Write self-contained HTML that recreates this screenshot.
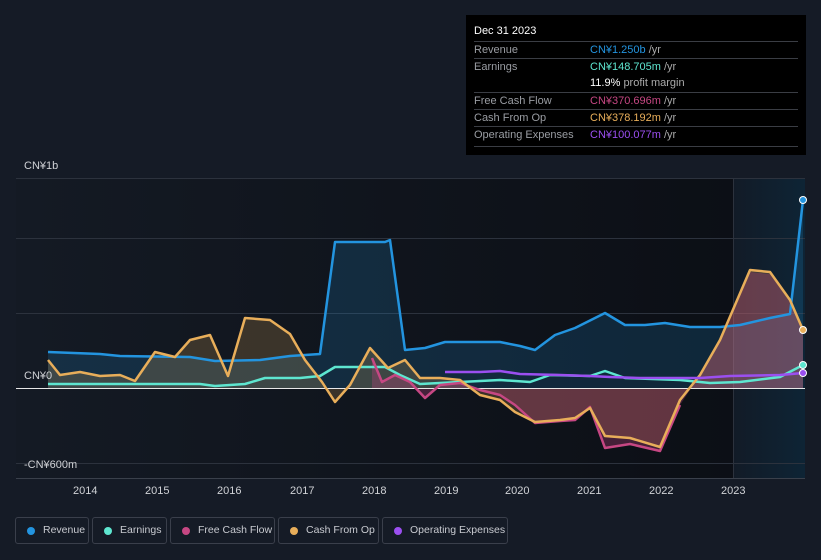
<!DOCTYPE html>
<html><head><meta charset="utf-8"><style>
body{margin:0;width:821px;height:560px;background:#151b26;font-family:"Liberation Sans",sans-serif;overflow:hidden;position:relative}
.tt{position:absolute;left:466px;top:15px;width:340px;height:140px;background:#000;color:#ccc;font-size:11px}
.tt .h{position:absolute;left:8px;top:10px;color:#fff;font-size:11px}
.row{position:absolute;left:8px;width:324px;border-top:1px solid #3a3d44;height:17px;line-height:17px;white-space:nowrap}
.row span.l{color:#9a9da3}
.row span.v{position:absolute;left:116px}
.u{color:#aaa}
.leg{position:absolute;top:517px;height:27px;border:1px solid #3a3f4b;border-radius:3px;color:#c8cad0;font-size:10.5px;line-height:25px;box-sizing:border-box;white-space:nowrap}
.leg i{position:absolute;left:11px;top:9px;width:8px;height:8px;border-radius:50%}
.leg span{position:absolute;left:27px}
.ax{position:absolute;color:#d0d2d6;font-size:11px;white-space:nowrap}
</style></head><body>
<svg width="821" height="560" style="position:absolute;left:0;top:0">
<defs>
<linearGradient id="pb" x1="0" x2="1"><stop offset="0" stop-color="#141a24"/><stop offset="1" stop-color="#0b0e14"/></linearGradient>
<linearGradient id="fc" x1="0" x2="1"><stop offset="0" stop-color="#121b27"/><stop offset="1" stop-color="#0e2435"/></linearGradient>
</defs>
<rect x="16" y="178" width="789" height="300" fill="url(#pb)"/>
<rect x="733" y="178" width="72" height="300" fill="url(#fc)"/>
<g stroke="#2c323d" stroke-width="1">
<line x1="16" x2="805" y1="178.5" y2="178.5"/><line x1="16" x2="805" y1="238.5" y2="238.5"/>
<line x1="16" x2="805" y1="313.5" y2="313.5"/><line x1="16" x2="805" y1="463.5" y2="463.5"/>
<line x1="16" x2="805" y1="478.5" y2="478.5" stroke="#3a404b"/>
<line x1="733.5" x2="733.5" y1="178" y2="478"/>
</g>
<path d="M48 352 L100 354 L120 356 L190 357 L215 361 L260 360 L290 356 L320 354 L335 242 L385 242 L390 240 L405 350 L425 348 L445 342 L500 342 L520 346 L535 350 L555 335 L575 328 L605 313 L625 325 L645 325 L665 323 L690 327 L720 327 L740 325 L770 318 L790 314 L803 200 L803 388 L48 388Z" fill="#2394df" fill-opacity="0.18"/>
<path d="M48 360 L60 375 L80 372 L100 376 L120 375 L135 381 L155 352 L175 357 L190 340 L210 335 L228 376 L245 318 L270 320 L290 334 L305 360 L322 382 L335 402 L350 385 L370 348 L388 368 L405 360 L420 378 L440 378 L460 380 L480 395 L500 400 L515 412 L535 422 L560 420 L575 418 L590 408 L605 436 L630 438 L660 447 L680 400 L700 375 L720 340 L750 270 L770 272 L790 300 L803 330 L803 388 L48 388Z" fill="#e8ae5a" fill-opacity="0.2"/>
<path d="M372 358 L382 382 L395 375 L410 382 L425 398 L440 385 L460 383 L480 390 L500 395 L515 405 L535 423 L560 421 L575 420 L590 407 L605 448 L630 444 L660 451 L680 405 L700 375 L720 342 L750 272 L770 274 L790 302 L803 332 L803 388 L372 388Z" fill="#c64783" fill-opacity="0.3"/>
<line x1="16" x2="805" y1="388.5" y2="388.5" stroke="#e8e8e8" stroke-width="1"/>
<g fill="none" stroke-width="2.5" stroke-linejoin="round">
<path d="M48 352 L100 354 L120 356 L190 357 L215 361 L260 360 L290 356 L320 354 L335 242 L385 242 L390 240 L405 350 L425 348 L445 342 L500 342 L520 346 L535 350 L555 335 L575 328 L605 313 L625 325 L645 325 L665 323 L690 327 L720 327 L740 325 L770 318 L790 314 L803 200" stroke="#2394df"/>
<path d="M48 384 L200 384 L215 386 L245 384 L265 378 L300 378 L320 376 L335 367 L385 367 L400 375 L420 384 L460 382 L500 380 L530 382 L550 375 L590 376 L605 371 L625 378 L680 380 L710 383 L740 382 L780 377 L803 365" stroke="#5ee6d0"/>
<path d="M372 358 L382 382 L395 375 L410 382 L425 398 L440 385 L460 383 L480 390 L500 395 L515 405 L535 423 L560 421 L575 420 L590 407 L605 448 L630 444 L660 451 L680 405" stroke="#c64783"/>
<path d="M48 360 L60 375 L80 372 L100 376 L120 375 L135 381 L155 352 L175 357 L190 340 L210 335 L228 376 L245 318 L270 320 L290 334 L305 360 L322 382 L335 402 L350 385 L370 348 L388 368 L405 360 L420 378 L440 378 L460 380 L480 395 L500 400 L515 412 L535 422 L560 420 L575 418 L590 408 L605 436 L630 438 L660 447 L680 400 L700 375 L720 340 L750 270 L770 272 L790 300 L803 330" stroke="#e8ae5a"/>
<path d="M445 372 L480 372 L500 371 L520 374 L560 375 L590 376 L610 377 L640 378 L700 378 L730 376 L780 375 L803 373" stroke="#9b4ff0"/>
</g>
<g stroke="#fff" stroke-width="1">
<circle cx="803" cy="200" r="3.5" fill="#2394df"/><circle cx="803" cy="330" r="3.5" fill="#e8ae5a"/>
<circle cx="803" cy="365" r="3.5" fill="#5ee6d0"/><circle cx="803" cy="373" r="3.5" fill="#9b4ff0"/>
</g>
</svg>
<div class="ax" style="left:24px;top:160px">CN¥1b</div>
<div class="ax" style="left:24px;top:370px">CN¥0</div>
<div class="ax" style="left:24px;top:459px">-CN¥600m</div>
<div class="ax" style="left:73px;top:485px">2014</div><div class="ax" style="left:145px;top:485px">2015</div>
<div class="ax" style="left:217px;top:485px">2016</div><div class="ax" style="left:290px;top:485px">2017</div>
<div class="ax" style="left:362px;top:485px">2018</div><div class="ax" style="left:434px;top:485px">2019</div>
<div class="ax" style="left:505px;top:485px">2020</div><div class="ax" style="left:577px;top:485px">2021</div>
<div class="ax" style="left:649px;top:485px">2022</div><div class="ax" style="left:721px;top:485px">2023</div>
<div class="tt">
<div class="h">Dec 31 2023</div>
<div class="row" style="top:26px"><span class="l">Revenue</span><span class="v"><b style="font-weight:normal;color:#2394df">CN¥1.250b</b> <span class="u">/yr</span></span></div>
<div class="row" style="top:43px"><span class="l">Earnings</span><span class="v"><b style="font-weight:normal;color:#5ee6d0">CN¥148.705m</b> <span class="u">/yr</span></span></div>
<div class="row" style="top:60px;border-top:none"><span class="v"><b style="font-weight:normal;color:#fff">11.9%</b> <span class="u">profit margin</span></span></div>
<div class="row" style="top:77px"><span class="l">Free Cash Flow</span><span class="v"><b style="font-weight:normal;color:#c64783">CN¥370.696m</b> <span class="u">/yr</span></span></div>
<div class="row" style="top:94px"><span class="l">Cash From Op</span><span class="v"><b style="font-weight:normal;color:#e8ae5a">CN¥378.192m</b> <span class="u">/yr</span></span></div>
<div class="row" style="top:111px"><span class="l">Operating Expenses</span><span class="v"><b style="font-weight:normal;color:#9b4ff0">CN¥100.077m</b> <span class="u">/yr</span></span></div>
<div class="row" style="top:131px;height:0"></div>
</div>
<div class="leg" style="left:15px;width:74px"><i style="background:#2394df"></i><span>Revenue</span></div>
<div class="leg" style="left:92px;width:75px"><i style="background:#5ee6d0"></i><span>Earnings</span></div>
<div class="leg" style="left:170px;width:105px"><i style="background:#c64783"></i><span>Free Cash Flow</span></div>
<div class="leg" style="left:278px;width:101px"><i style="background:#e8ae5a"></i><span>Cash From Op</span></div>
<div class="leg" style="left:382px;width:126px"><i style="background:#9b4ff0"></i><span>Operating Expenses</span></div>
</body></html>
